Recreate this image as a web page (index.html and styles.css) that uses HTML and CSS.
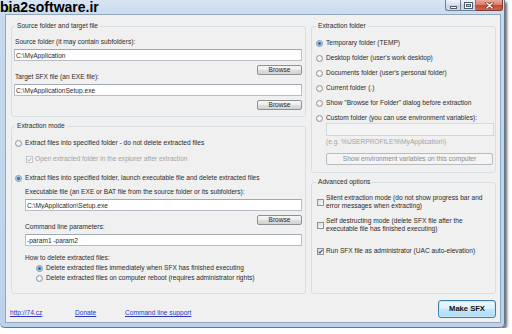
FILE: index.html
```html
<!DOCTYPE html>
<html lang="en">
<head>
    <meta charset="UTF-8">
    <meta name="viewport" content="width=device-width, initial-scale=1.0">
    <title>SFX Maker</title>
    <link rel="stylesheet" href="styles.css">
</head>
<body>
    <div class="window">
        <div class="watermark">bia2software.ir</div>

        <div class="titlebar">
            <span class="app-icon"></span>
            <div class="caption">
                <span class="cap cap-min"><i></i></span>
                <span class="cap cap-max"><i></i></span>
                <span class="cap cap-close">
                    <svg width="9" height="7" viewBox="0 0 9 7"><path d="M1.8 1 L7.2 6 M7.2 1 L1.8 6" stroke="#6e2418" stroke-width="2.8" stroke-linecap="round"/><path d="M1.8 1 L7.2 6 M7.2 1 L1.8 6" stroke="#fff" stroke-width="1.5" stroke-linecap="round"/></svg>
                </span>
            </div>
        </div>

        <div class="client">
            <div class="main">
                <!-- left column -->
                <div class="col">
                    <div class="group group-source">
                        <div class="group-title">Source folder and target file</div>
                        <div class="label">Source folder (it may contain subfolders):</div>
                        <input class="field field-wide" type="text" value="C:\MyApplication">
                        <div class="btn-row"><button class="btn">Browse</button></div>
                        <div class="label">Target SFX file (an EXE file):</div>
                        <input class="field field-wide" type="text" value="C:\MyApplicationSetup.exe">
                        <div class="btn-row"><button class="btn">Browse</button></div>
                    </div>

                    <div class="group group-grow">
                        <div class="group-title">Extraction mode</div>
                        <div class="option mode-option">
                            <span class="radio"></span>
                            <span>Extract files into specified folder - do not delete extracted files</span>
                        </div>
                        <div class="option option-check sub-check disabled">
                            <span class="check disabled">
                                <svg width="5" height="5" viewBox="0 0 5 5"><path d="M0.6 2.6 L1.9 4 L4.4 0.8" fill="none" stroke="#a9adb3" stroke-width="1"/></svg>
                            </span>
                            <span>Open extracted folder in the explorer after extraction</span>
                        </div>
                        <div class="option mode-option mode-second">
                            <span class="radio checked"></span>
                            <span>Extract files into specified folder, launch executable file and delete extracted files</span>
                        </div>
                        <div class="label indent">Executable file (an EXE or BAT file from the source folder or its subfolders):</div>
                        <input class="field field-indent" type="text" value="C:\MyApplication\Setup.exe">
                        <div class="btn-row"><button class="btn">Browse</button></div>
                        <div class="label indent">Command line parameters:</div>
                        <input class="field field-indent" type="text" value="-param1 -param2">
                        <div class="label indent">How to delete extracted files:</div>
                        <div class="option delete-option">
                            <span class="radio checked"></span>
                            <span>Delete extracted files immediately when SFX has finished executing</span>
                        </div>
                        <div class="option delete-option">
                            <span class="radio"></span>
                            <span>Delete extracted files on computer reboot (requires administrator rights)</span>
                        </div>
                    </div>
                </div>

                <!-- right column -->
                <div class="col col-right">
                    <div class="group group-folder">
                        <div class="group-title">Extraction folder</div>
                        <div class="option folder-option"><span class="radio checked"></span><span>Temporary folder (TEMP)</span></div>
                        <div class="option folder-option"><span class="radio"></span><span>Desktop folder (user's work desktop)</span></div>
                        <div class="option folder-option"><span class="radio"></span><span>Documents folder (user's personal folder)</span></div>
                        <div class="option folder-option"><span class="radio"></span><span>Current folder (.)</span></div>
                        <div class="option folder-option"><span class="radio"></span><span>Show "Browse for Folder" dialog before extraction</span></div>
                        <div class="option folder-option"><span class="radio"></span><span>Custom folder (you can use environment variables):</span></div>
                        <input class="field field-custom" type="text" value="" disabled>
                        <div class="hint">(e.g. %USERPROFILE%\MyApplication\)</div>
                        <button class="btn btn-env" disabled>Show environment variables on this computer</button>
                    </div>

                    <div class="group group-grow group-advanced">
                        <div class="group-title">Advanced options</div>
                        <div class="option option-check adv-option">
                            <span class="check"></span>
                            <span>Silent extraction mode (do not show progress bar and<br>error messages when extracting)</span>
                        </div>
                        <div class="option option-check adv-option">
                            <span class="check"></span>
                            <span>Self destructing mode (delete SFX file after the<br>executable file has finished executing)</span>
                        </div>
                        <div class="option option-check adv-option adv-last">
                            <span class="check">
                                <svg width="5" height="5" viewBox="0 0 5 5"><path d="M0.6 2.6 L1.9 4 L4.4 0.8" fill="none" stroke="#2f4a8a" stroke-width="1.1"/></svg>
                            </span>
                            <span>Run SFX file as administrator (UAC auto-elevation)</span>
                        </div>
                    </div>
                </div>
            </div>

            <div class="footer">
                <div class="links">
                    <a href="#">http://74.cz</a>
                    <a href="#">Donate</a>
                    <a href="#">Command line support</a>
                </div>
                <button class="btn btn-default">Make SFX</button>
            </div>
        </div>
    </div>
</body>
</html>
```

FILE: styles.css
```css
body {
    margin: 0;
    background: #fff;
    font-family: "Liberation Sans", Arial, sans-serif;
    font-size: 6.6px;
    line-height: 8px;
    color: #2b2b2b;
}

/* window frame */
.window {
    position: relative;
    box-sizing: border-box;
    width: 505px;
    height: 328px;
    background: linear-gradient(#d8e4f1, #c6d9ee 18px, #bdd2ea);
    border-right: 1px solid #63778e;
    border-bottom: 1px solid #63778e;
    border-radius: 0 0 5px 5px;
    box-shadow: 2px 2px 3px rgba(0, 0, 0, 0.6);
}

.watermark {
    position: absolute;
    left: 0;
    top: 0;
    font-size: 14px;
    line-height: 14px;
    font-weight: bold;
    color: #000;
    z-index: 2;
}

.titlebar {
    display: flex;
    justify-content: space-between;
    align-items: flex-start;
    height: 14px;
}

.app-icon {
    width: 6px;
    height: 6px;
    margin: 6px 0 0 6px;
    background: linear-gradient(#e4d94a, #6cb63a);
}

.caption {
    display: flex;
    margin-right: 1px;
}

.cap {
    box-sizing: border-box;
    height: 11px;
    display: flex;
    align-items: center;
    justify-content: center;
    border: 1px solid #6f7e91;
    border-top: none;
    background: linear-gradient(#eef3f9, #d7e2ee 45%, #c2d1e3 50%, #d0dded);
}

.cap-min {
    width: 15px;
    border-right: none;
    border-bottom-left-radius: 3px;
}

.cap-max {
    width: 16px;
}

.cap-close {
    width: 27px;
    border-left: none;
    border-color: #7d3b2f;
    border-bottom-right-radius: 3px;
    background: linear-gradient(#eba99b, #da806c 45%, #c5462f 50%, #d1664d);
}

.cap-min i {
    width: 5px;
    height: 1px;
    margin-top: 4px;
    background: #fff;
    border: 1px solid #4d5b6e;
}

.cap-max i {
    box-sizing: border-box;
    width: 7px;
    height: 5px;
    border: 1px solid #fff;
    box-shadow: 0 0 0 1px #4d5b6e, inset 0 0 0 1px #4d5b6e;
}

/* client area */
.client {
    box-sizing: border-box;
    width: 496px;
    height: 309px;
    margin-left: 5px;
    background: #f0f0f0;
    border: 1px solid #94a7be;
}

.main {
    display: grid;
    grid-template-columns: 295px 185px;
    column-gap: 5px;
    height: 268px;
    padding: 11px 0 0 5px;
}

.col {
    display: flex;
    flex-direction: column;
    gap: 9px;
}

.group {
    box-sizing: border-box;
    border: 1px solid #d5dfe5;
    border-radius: 3px;
}

.group-source {
    height: 91px;
}

.group-folder {
    height: 147px;
}

.group-grow {
    flex: 1;
}

.group-title {
    width: fit-content;
    margin: -5px 0 0 3px;
    padding: 0 2px;
    background: #f0f0f0;
}

.col-right .group-title {
    margin-left: 4px;
}

.label {
    margin-top: 8px;
    padding-left: 3px;
}

.label.indent {
    padding-left: 13px;
}

.btn-row + .label {
    margin-top: -2px;
}

.mode-second + .label {
    margin-top: 6px;
}

/* text fields */
.field {
    display: block;
    box-sizing: border-box;
    height: 12px;
    margin-top: 3px;
    padding: 0 1px;
    font: inherit;
    color: #2b2b2b;
    background: #fff;
    border: 1px solid #b9bec6;
    border-top-color: #a3a9b2;
    outline: none;
}

.field-wide {
    width: 288px;
    margin-left: 2px;
}

.field-indent {
    width: 277px;
    margin-left: 13px;
}

.field-custom {
    width: 168px;
    height: 13px;
    margin: 1px 0 0 14px;
    background: #f4f4f4;
    border-color: #d3d8de;
}

.hint {
    margin: 2px 0 0 14px;
    color: #a3a3a3;
}

/* buttons */
.btn-row {
    display: flex;
    justify-content: flex-end;
    margin-top: 4px;
    padding-right: 3px;
}

.btn {
    box-sizing: border-box;
    width: 45px;
    height: 10px;
    padding: 0;
    font: inherit;
    line-height: 8px;
    color: #2b2b2b;
    border: 1px solid #8e9094;
    border-radius: 2px;
    background: linear-gradient(#f7f7f7, #ececec 50%, #dedede 50%, #d3d3d3);
}

.btn-env {
    display: block;
    width: 167px;
    height: 12px;
    margin: 7px 0 0 14px;
    color: #8c8c8c;
    border-color: #b8bcc0;
    background: #f4f4f4;
}

.btn-default {
    width: 58px;
    height: 18px;
    font-size: 7.6px;
    font-weight: bold;
    color: #111;
    border: 1px solid #3c7fb1;
    border-radius: 3px;
    background: linear-gradient(#eef8fe, #dcf1fc 50%, #c2e7fc 50%, #aedcf5);
    box-shadow: inset 0 0 0 1px #c4e9fb;
}

/* radios and checkboxes */
.option {
    display: flex;
    align-items: center;
    gap: 3px;
    margin-top: 7px;
}

.option-check {
    gap: 2px;
}

.group-title + .option {
    margin-top: 9px;
}

.option.disabled {
    color: #a3a3a3;
}

.mode-option {
    margin-left: 3px;
}

.sub-check {
    margin: 8px 0 0 14px;
}

.mode-second {
    margin-top: 11px;
}

.delete-option {
    margin: 2px 0 0 24px;
}

.folder-option {
    margin-left: 4px;
}

.adv-option {
    margin-left: 5px;
}

.group-advanced .group-title + .option {
    margin-top: 8px;
}

.adv-last {
    margin-top: 14px;
}

.radio {
    box-sizing: border-box;
    flex: none;
    width: 7px;
    height: 7px;
    border-radius: 50%;
    border: 1px solid #8e9399;
    background: radial-gradient(circle at 50% 40%, #fff, #dfe2e6);
}

.radio.checked {
    background: radial-gradient(circle, #1c5fae 0, #3a88d6 1.3px, #a6cdf1 2.1px, #eef2f6 2.6px);
}

.check {
    box-sizing: border-box;
    flex: none;
    display: flex;
    align-items: center;
    justify-content: center;
    width: 7px;
    height: 7px;
    border: 1px solid #8e9399;
    background: linear-gradient(135deg, #d9dde2, #fbfbfb);
}

.check.disabled {
    border-color: #c3c6ca;
    background: #f4f4f4;
}

/* footer */
.footer {
    display: flex;
    justify-content: space-between;
    height: 18px;
    margin-top: 6px;
    padding: 0 4px;
}

.links {
    display: grid;
    grid-template-columns: 65px 50px auto;
    align-self: flex-end;
    margin-bottom: 1px;
}

.links a {
    color: #2638c6;
    text-decoration: underline;
}
```
